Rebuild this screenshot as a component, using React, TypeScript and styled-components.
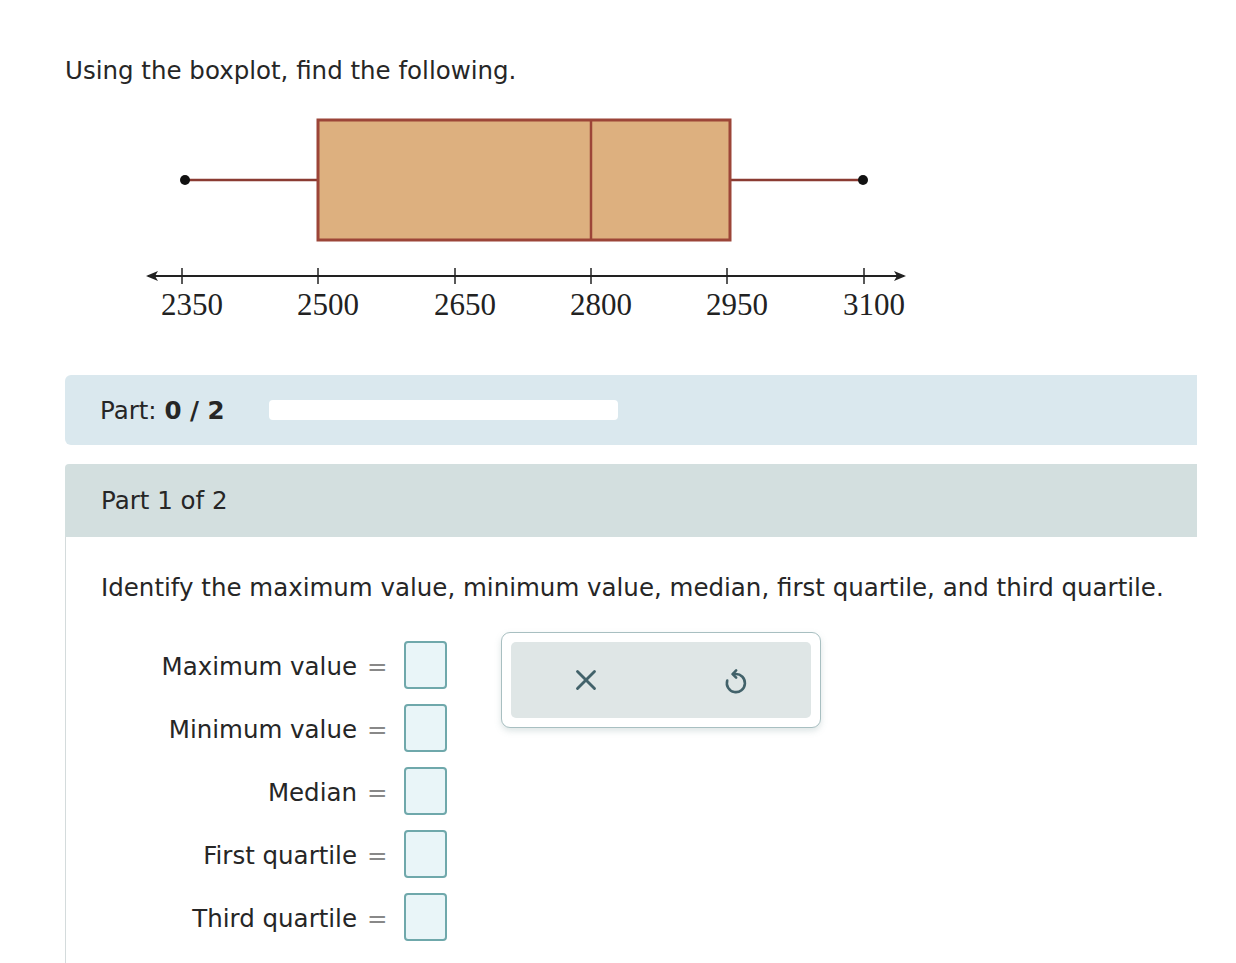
import styled, { createGlobalStyle } from "styled-components";
import { X } from "lucide-react";

const GlobalStyle = createGlobalStyle`
  body {
    margin: 0;
    background: #ffffff;
    font-family: "DejaVu Sans", Verdana, sans-serif;
    color: #262626;
  }
`;

const Page = styled.div`
  padding: 0 39px 0 65px;
  height: 963px;
  overflow: hidden;
`;

const Title = styled.p`
  margin: 0;
  padding-top: 56px;
  font-size: 24.5px;
  line-height: 30px;
`;

const PlotWrap = styled.div`
  margin: 23px 0 0 75px;
  height: 266px;
`;

const ProgressBar = styled.div`
  display: flex;
  align-items: center;
  gap: 44px;
  height: 70px;
  padding-left: 35px;
  background: #dae8ee;
  border-radius: 6px 0 0 6px;
  font-size: 24.5px;
`;

const Track = styled.div`
  width: 349px;
  height: 20px;
  background: #fff;
  border-radius: 4px;
`;

const PartCard = styled.section`
  margin-top: 19px;
`;

const PartHeader = styled.div`
  display: flex;
  align-items: center;
  height: 73px;
  padding-left: 36px;
  background: #d3dfdf;
  border-radius: 4px 0 0 0;
  font-size: 24.5px;
`;

const PartBody = styled.div`
  border-left: 1px solid #d4dbdc;
  padding: 35px 0 0 35px;
  height: 430px;
`;

const Question = styled.p`
  margin: 0;
  font-size: 24.5px;
  line-height: 32px;
`;

const AnswerArea = styled.div`
  display: flex;
  align-items: flex-start;
  gap: 54px;
  margin-top: 37px;
`;

const Grid = styled.div`
  display: grid;
  grid-template-columns: 256px auto auto;
  row-gap: 15px;
  align-items: center;
`;

const Label = styled.span`
  text-align: right;
  font-size: 24.5px;
  padding-top: 2px;
  white-space: nowrap;
`;

const Eq = styled.span`
  font-size: 24.5px;
  color: #888;
  padding: 2px 16px 0 10px;
`;

const InputBox = styled.div`
  width: 39px;
  height: 44px;
  border: 2px solid #6fa8ab;
  border-radius: 4px;
  background: #e9f5f8;
`;

const ButtonPanel = styled.div`
  margin-top: -9px;
  width: 300px;
  padding: 9px;
  border: 1.5px solid #a8bfc1;
  border-radius: 9px;
  background: #fff;
  box-shadow: 0 3px 6px rgba(120, 150, 150, 0.25);
`;

const ButtonRow = styled.div`
  display: flex;
  height: 76px;
  background: #dfe6e6;
  border-radius: 5px;
`;

const IconButton = styled.button`
  flex: 1;
  display: flex;
  align-items: center;
  justify-content: center;
  border: none;
  background: transparent;
  color: #42626a;
  padding: 0;
`;

const ticks = [
  { x: 42, label: "2350" },
  { x: 178, label: "2500" },
  { x: 315, label: "2650" },
  { x: 451, label: "2800" },
  { x: 587, label: "2950" },
  { x: 724, label: "3100" },
];

function BoxPlot() {
  return (
    <svg width="780" height="230" viewBox="0 0 780 230">
      <line x1="45" y1="71" x2="178" y2="71" stroke="#8a3b32" strokeWidth="2.5" />
      <line x1="590" y1="71" x2="723" y2="71" stroke="#8a3b32" strokeWidth="2.5" />
      <circle cx="45" cy="71" r="5" fill="#111" />
      <circle cx="723" cy="71" r="5" fill="#111" />
      <rect x="178" y="11" width="412" height="120" fill="#ddb07f" stroke="#9c4538" strokeWidth="3" />
      <line x1="451" y1="11" x2="451" y2="131" stroke="#9c4538" strokeWidth="2.5" />
      <line x1="8" y1="167" x2="764" y2="167" stroke="#222" strokeWidth="2" />
      <path d="M6 167 L18 162 L15 167 L18 172 Z" fill="#222" />
      <path d="M766 167 L754 162 L757 167 L754 172 Z" fill="#222" />
      {ticks.map((t) => (
        <g key={t.label}>
          <line x1={t.x} y1="159" x2={t.x} y2="175" stroke="#222" strokeWidth="1.5" />
          <text
            x={t.x + 10}
            y="206"
            textAnchor="middle"
            fontFamily="'Liberation Serif', serif"
            fontSize="31"
            fill="#222"
          >
            {t.label}
          </text>
        </g>
      ))}
    </svg>
  );
}

function UndoIcon() {
  return (
    <svg width="31" height="31" viewBox="0 0 24 24" fill="none" stroke="currentColor" strokeWidth="2" strokeLinecap="round" strokeLinejoin="round">
      <path d="M5.6 12 A7 7 0 1 0 12 7 H10" />
      <path d="M12.5 4.2 L9.8 7 L12.5 9.8" />
    </svg>
  );
}

const rows = ["Maximum value", "Minimum value", "Median", "First quartile", "Third quartile"];

export default function App() {
  return (
    <>
      <GlobalStyle />
      <Page>
        <Title>Using the boxplot, find the following.</Title>
        <PlotWrap>
          <BoxPlot />
        </PlotWrap>
        <ProgressBar>
          <span>
            Part: <b>0 / 2</b>
          </span>
          <Track />
        </ProgressBar>
        <PartCard>
          <PartHeader>Part 1 of 2</PartHeader>
          <PartBody>
            <Question>
              Identify the maximum value, minimum value, median, first quartile, and third quartile.
            </Question>
            <AnswerArea>
              <Grid>
                {rows.map((r) => (
                  <>
                    <Label key={r}>{r}</Label>
                    <Eq>=</Eq>
                    <InputBox />
                  </>
                ))}
              </Grid>
              <ButtonPanel>
                <ButtonRow>
                  <IconButton>
                    <X size={34} strokeWidth={2} />
                  </IconButton>
                  <IconButton>
                    <UndoIcon />
                  </IconButton>
                </ButtonRow>
              </ButtonPanel>
            </AnswerArea>
          </PartBody>
        </PartCard>
      </Page>
    </>
  );
}
